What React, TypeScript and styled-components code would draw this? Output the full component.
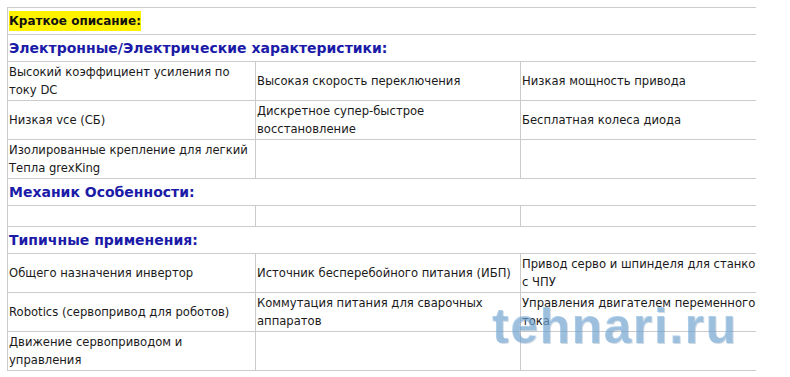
import * as React from 'react';
import styled, { createGlobalStyle } from 'styled-components';

const GlobalStyle = createGlobalStyle`
  html, body {
    margin: 0;
    padding: 0;
    background: #ffffff;
  }
  body {
    font-family: "DejaVu Sans", Verdana, sans-serif;
  }
`;

const Page = styled.div`
  position: relative;
  padding: 7px 0 0 7px;
  width: 749px;
  overflow: hidden;
`;

const Table = styled.table`
  width: 759px;
  table-layout: fixed;
  border-collapse: collapse;
  font-size: 11.6px;
  line-height: 18px;
  color: #1a1a1a;
`;

const Cell = styled.td`
  border: 1px solid #cbcbcb;
  padding: 1px 0 1px 1px;
  vertical-align: middle;
  word-wrap: break-word;
`;

const HeadingCell = styled.td<{ $tone?: 'plain' | 'blue' }>`
  border: 1px solid #cbcbcb;
  padding: 1px 1px;
  height: 24px;
  vertical-align: middle;
  font-weight: bold;
  font-size: ${(p) => (p.$tone === 'blue' ? '14px' : '12px')};
  color: ${(p) => (p.$tone === 'blue' ? '#1b1ba8' : '#111111')};
`;

const Highlight = styled.span`
  background: #fff200;
  padding: 3px 0;
`;

const Watermark = styled.div`
  position: absolute;
  left: 492px;
  top: 301px;
  font-family: "Liberation Sans", Arial, sans-serif;
  font-weight: bold;
  font-size: 50px;
  letter-spacing: 1.5px;
  line-height: 1;
  color: rgba(120, 172, 216, 0.6);
  text-shadow: 1px 1px 0 rgba(70, 110, 150, 0.25);
  pointer-events: none;
`;

type Row = [string, string, string];

const electric: Row[] = [
  ['Высокий коэффициент усиления по току DC', 'Высокая скорость переключения', 'Низкая мощность привода'],
  ['Низкая vce (СБ)', 'Дискретное супер-быстрое восстановление', 'Бесплатная колеса диода'],
  ['Изолированные крепление для легкий Тепла grexKing', '', ''],
];

const apps: Row[] = [
  ['Общего назначения инвертор', 'Источник бесперебойного питания (ИБП)', 'Привод серво и шпинделя для станков с ЧПУ'],
  ['Robotics (сервопривод для роботов)', 'Коммутация питания для сварочных аппаратов', 'Управления двигателем переменного тока'],
  ['Движение сервоприводом и управления', '', ''],
];

function DataRows({ rows }: { rows: Row[] }) {
  return (
    <>
      {rows.map((r, i) => (
        <tr key={i} style={{ height: 39 }}>
          {r.map((c, j) => (
            <Cell key={j}>{c || '\u00a0'}</Cell>
          ))}
        </tr>
      ))}
    </>
  );
}

export default function App() {
  return (
    <>
      <GlobalStyle />
      <Page>
        <Table>
          <colgroup>
            <col style={{ width: 248 }} />
            <col style={{ width: 265 }} />
            <col style={{ width: 246 }} />
          </colgroup>
          <tbody>
            <tr>
              <HeadingCell colSpan={3}>
                <Highlight>Краткое описание:</Highlight>
              </HeadingCell>
            </tr>
            <tr>
              <HeadingCell colSpan={3} $tone="blue">Электронные/Электрические характеристики:</HeadingCell>
            </tr>
            <DataRows rows={electric} />
            <tr>
              <HeadingCell colSpan={3} $tone="blue">Механик Особенности:</HeadingCell>
            </tr>
            <tr>
              <Cell>{'\u00a0'}</Cell>
              <Cell>{'\u00a0'}</Cell>
              <Cell>{'\u00a0'}</Cell>
            </tr>
            <tr>
              <HeadingCell colSpan={3} $tone="blue">Типичные применения:</HeadingCell>
            </tr>
            <DataRows rows={apps} />
          </tbody>
        </Table>
        <Watermark>tehnari.ru</Watermark>
      </Page>
    </>
  );
}
